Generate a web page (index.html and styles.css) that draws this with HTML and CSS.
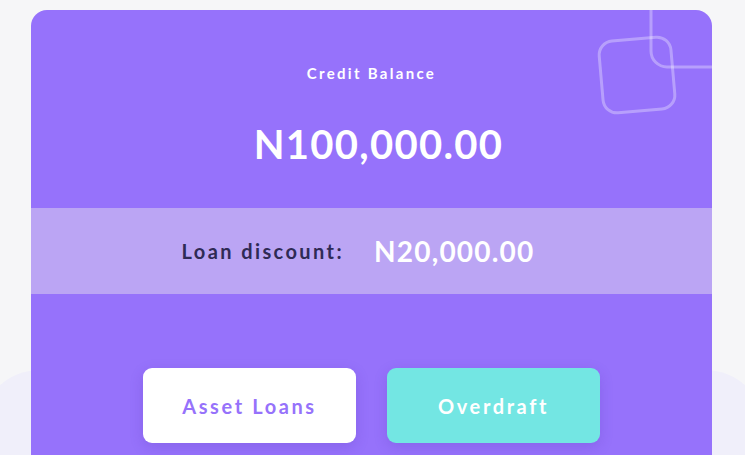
FILE: index.html
```html
<!DOCTYPE html>
<html>
<head>
<meta charset="utf-8">
<link rel="stylesheet" href="styles.css">
</head>
<body>
<div class="backdrop"></div>
<main class="card">
  <svg class="deco" width="140" height="130" viewBox="0 0 140 130">
    <rect x="79" y="-45" width="100" height="102" rx="16" fill="none" stroke="rgba(255,255,255,0.32)" stroke-width="3"/>
    <rect x="-36" y="-36" width="72" height="72" rx="14" fill="none" stroke="rgba(255,255,255,0.32)" stroke-width="3" transform="translate(65 65) rotate(-5)"/>
  </svg>
  <section class="head">
    <div class="label">Credit Balance</div>
    <div class="amount">N100,000.00</div>
  </section>
  <section class="band">
    <span class="band-label">Loan discount:</span>
    <span class="band-value">N20,000.00</span>
  </section>
  <section class="actions">
    <button class="btn btn-white">Asset Loans</button>
    <button class="btn btn-teal">Overdraft</button>
  </section>
</main>
</body>
</html>
```
FILE: styles.css
```css
html, body {
  margin: 0;
  padding: 0;
  background: #f6f6f8;
  font-family: "Lato", "Noto Sans", sans-serif;
  overflow: hidden;
  height: 455px;
}
body {
  position: relative;
  padding-top: 10px;
  box-sizing: border-box;
}
.backdrop {
  position: absolute;
  left: -20px;
  right: -20px;
  top: 370px;
  bottom: 0;
  border-radius: 60px 60px 0 0;
  background: #f0effa;
}
.card {
  position: relative;
  margin-left: 31px;
  width: 681px;
  height: 445px;
  background: #9672fb;
  border-radius: 16px 16px 0 0;
  overflow: hidden;
}
.deco {
  position: absolute;
  right: 0;
  top: 0;
}
.head {
  height: 198px;
  display: flex;
  flex-direction: column;
  align-items: center;
  box-sizing: border-box;
  padding-top: 54px;
  color: #fff;
}
.label {
  font-size: 15px;
  font-weight: 700;
  letter-spacing: 2.3px;
}
.amount {
  margin-top: 38px;
  margin-left: 14px;
  font-size: 40px;
  font-weight: 700;
  letter-spacing: 1.3px;
}
.band {
  height: 86px;
  background: #bba5f4;
  display: flex;
  align-items: center;
  justify-content: center;
  gap: 30px;
  padding-right: 27px;
}
.band-label {
  color: #2f2a55;
  font-size: 20px;
  font-weight: 700;
  letter-spacing: 2.4px;
}
.band-value {
  color: #fff;
  font-size: 28px;
  font-weight: 700;
  letter-spacing: 1.2px;
}
.actions {
  display: flex;
  justify-content: center;
  gap: 31px;
  padding-top: 74px;
}
.btn {
  width: 213px;
  height: 75px;
  border: none;
  border-radius: 9px;
  font-family: inherit;
  font-size: 20px;
  font-weight: 700;
  letter-spacing: 2.6px;
  box-shadow: 0 4px 14px rgba(70, 40, 160, 0.18);
}
.btn-white {
  background: #fff;
  color: #9672fb;
}
.btn-teal {
  background: #73e6e3;
  color: #fff;
}
```
